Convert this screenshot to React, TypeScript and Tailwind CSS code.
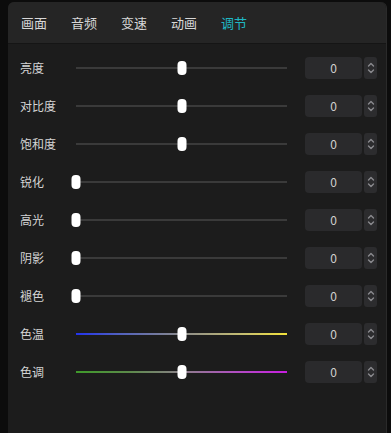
import React from "react";

const tabs = ["画面", "音频", "变速", "动画", "调节"];

type Row = { label: string; pos: number; track?: string };

const rows: Row[] = [
  { label: "亮度", pos: 0.5 },
  { label: "对比度", pos: 0.5 },
  { label: "饱和度", pos: 0.5 },
  { label: "锐化", pos: 0 },
  { label: "高光", pos: 0 },
  { label: "阴影", pos: 0 },
  { label: "褪色", pos: 0 },
  { label: "色温", pos: 0.5, track: "bg-[linear-gradient(90deg,#2233ee_0%,#5060c0_20%,#8a8a8a_50%,#c8c070_80%,#f2e23a_100%)]" },
  { label: "色调", pos: 0.5, track: "bg-[linear-gradient(90deg,#3f9a2a_0%,#5c8a4a_25%,#8a8088_50%,#b050c0_75%,#c81ee0_100%)]" },
];

function Stepper() {
  return (
    <div className="flex h-[22px] w-[13px] flex-col items-center justify-center rounded-[3px] bg-[#2c2c2e]">
      <svg width="8" height="14" viewBox="0 0 8 14" fill="none" stroke="#8a8a8e" strokeWidth="1.4" strokeLinecap="round" strokeLinejoin="round">
        <path d="M1.5 5 4 2.5 6.5 5" />
        <path d="M1.5 9 4 11.5 6.5 9" />
      </svg>
    </div>
  );
}

function SliderRow({ row }: { row: Row }) {
  return (
    <div className="flex h-[38px] items-center">
      <span className="w-[56px] text-[12px] text-[#d4d4d4]">{row.label}</span>
      <div className="relative h-[14px] w-[211px]">
        <div className={`absolute left-0 right-0 top-[6px] h-[2px] ${row.track ?? "bg-[#3a3a3a]"}`} />
        <div
          className="absolute top-0 h-[14px] w-[9px] -translate-x-1/2 rounded-[4px] bg-white"
          style={{ left: `${row.pos * 100}%` }}
        />
      </div>
      <div className="ml-[18px] flex h-[22px] w-[57px] items-center justify-center rounded-[4px] bg-[#2a2a2c] text-[12px] text-[#d0d0d0]">
        0
      </div>
      <div className="ml-[2px]">
        <Stepper />
      </div>
    </div>
  );
}

export default function App() {
  return (
    <div
      className="h-[433px] w-[391px] overflow-hidden bg-[#0c0c0c] pl-[8px] pt-[2px]"
      style={{ fontFamily: '"Noto Sans CJK SC", "Noto Sans", sans-serif' }}
    >
      <div className="h-[440px] w-[379px] rounded-t-[6px] border-r border-[#2a2a2a] bg-[#1c1c1c]">
        <div className="flex h-[42px] items-center gap-[24px] rounded-t-[6px] border-b border-[#151515] bg-[#252525] pl-[13px]">
          {tabs.map((t, i) => (
            <span key={t} className={`text-[13px] ${i === 4 ? "text-[#1fb8c4]" : "text-[#d8d8d8]"}`}>
              {t}
            </span>
          ))}
        </div>
        <div className="flex flex-col pl-[12px] pt-[5px]">
          {rows.map((r) => (
            <SliderRow key={r.label} row={r} />
          ))}
        </div>
      </div>
    </div>
  );
}
